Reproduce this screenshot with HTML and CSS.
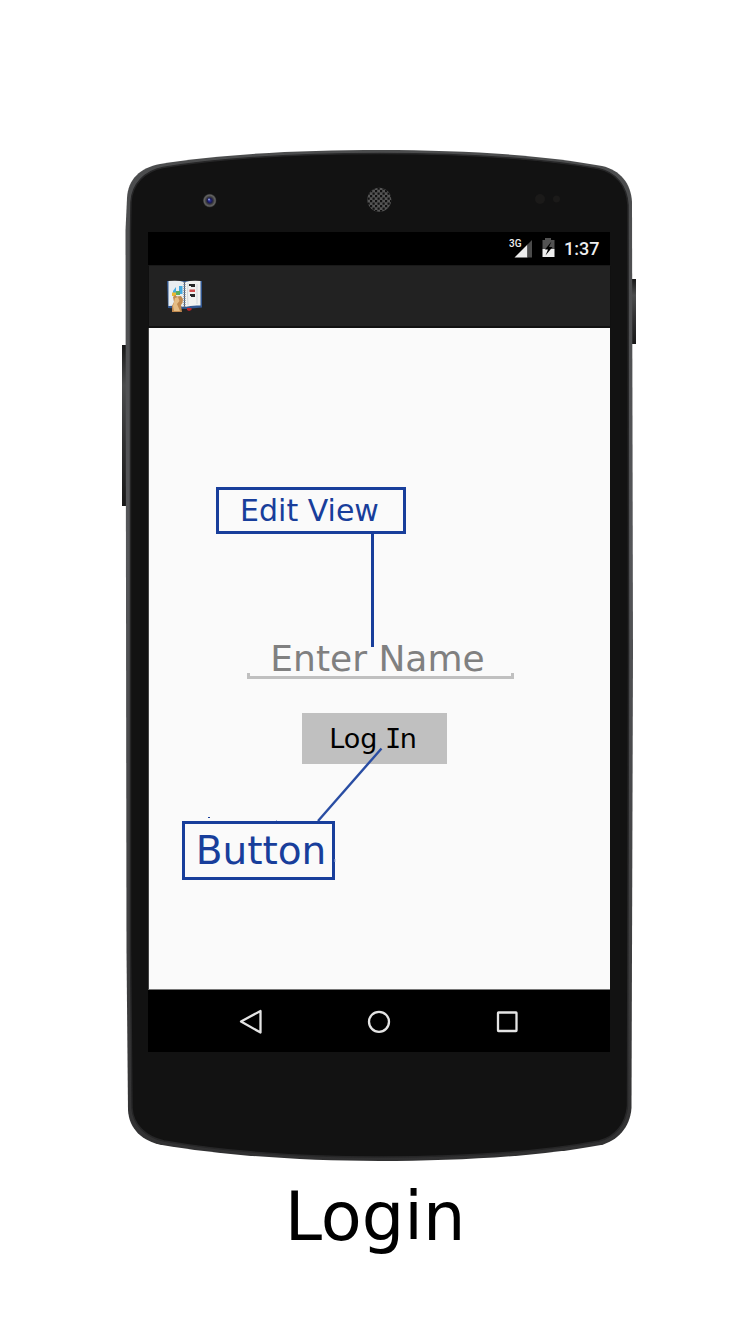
FILE: index.html
```
<!DOCTYPE html>
<html lang="en">
<head>
<meta charset="utf-8">
<title>Login</title>
<link rel="stylesheet" href="styles.css">
</head>
<body>
<figure class="mockup">
  <div class="phone">
    <svg class="shell" viewBox="115 150 530 1011" aria-hidden="true">
      <defs>
        <linearGradient id="rim" x1="0" y1="0" x2="0" y2="1">
          <stop offset="0" stop-color="#4b4c4d"/><stop offset=".4" stop-color="#555659"/><stop offset=".85" stop-color="#3b3b3c"/><stop offset="1" stop-color="#303031"/>
        </linearGradient>
        <linearGradient id="key" x1="0" y1="0" x2="0" y2="1">
          <stop offset="0" stop-color="#171717"/><stop offset=".25" stop-color="#4b4c4d"/><stop offset=".6" stop-color="#303031"/><stop offset="1" stop-color="#181818"/>
        </linearGradient>
        <radialGradient id="lens"><stop offset="0" stop-color="#3138ad"/><stop offset=".35" stop-color="#191950"/><stop offset=".55" stop-color="#3c3c3c"/><stop offset=".8" stop-color="#656565"/><stop offset="1" stop-color="#252525"/></radialGradient>
        <pattern id="mesh" width="5" height="5" patternUnits="userSpaceOnUse"><path d="M0 0h2.2v2.2H0zM2.500 2.500h2.200v2.200H2.500z" fill="#111"/></pattern>
      </defs>
      <path d="M122 345h6v161h-6z" fill="url(#key)"/>
      <path d="M630 279h6v65h-6z" fill="url(#key)"/>
      <path d="M125.500 230L127 198C128 179 140 168 160 164C222 154 300 150 380 150C465 150 542 155 602 166C620 170 631 183 632 202L633 650L631.500 1108C630 1128 617 1141 601 1145C542 1156 460 1161 379 1161C300 1161 220 1155 162 1145C142 1141 129 1129 128 1110L126.500 950L126 600Z" fill="url(#rim)"/>
      <path d="M130.500 230L131 202C132 184 145 171 163 167.500C225 157.500 302 153.500 380 153.500C463 153.500 540 158.500 598 168.500C616 172.500 627 186 628 205L628.500 650L627.500 1106C626 1124 615 1137 599 1141C540 1152 459 1157 379 1157C301 1157 222 1151 164 1141C146 1137 133 1125 132 1108L130.500 950Z" fill="#121212" stroke="#262627" stroke-width="1.5"/>
      <circle cx="209.700" cy="200.600" r="6.800" fill="url(#lens)"/><circle cx="209" cy="199.500" r="1" fill="#8b99e0"/>
      <circle cx="379.300" cy="199.700" r="12" fill="#555"/><circle cx="379.300" cy="199.700" r="12" fill="url(#mesh)"/>
      <circle cx="540" cy="199" r="5" fill="#1b1a19"/><circle cx="556.500" cy="199" r="3.500" fill="#1b1a19"/>
    </svg>

    <div class="screen">
      <header class="status">
        <svg class="signal" viewBox="0 0 24 20" aria-hidden="true"><path d="M5.500 18.500 18.500 5.500V18.500Z" fill="#eee"/><path d="M18.500 5.500 23 1V18.500H18.500Z" fill="#4b4b4b"/></svg>
        <span class="network">3G</span>
        <svg class="battery" viewBox="0 0 13 20" aria-hidden="true"><path d="M.5 2H3V0H9V2H12.500V11H.5Z" fill="#525252"/><path d="M.5 11H12.500V19H.5Z" fill="#eee"/><path d="M9.500 3.500 3 11.500H6L3.500 17.500 10.500 9H7Z" fill="#000"/></svg>
        <time class="clock">1:37</time>
      </header>

      <div class="appbar">
        <svg class="book" viewBox="0 0 36 34" aria-hidden="true">
          <path d="M0 1H35V27.500L19 29 1 28Z" fill="#31568f"/>
          <path d="M1.500 1Q12 0 17 2V27Q10 25 1.500 26Z" fill="#e8edf0"/>
          <path d="M18 2Q25 0 33.500 1V25.500Q24 25 18 27Z" fill="#f2f2f0"/>
          <path d="M17.500 2V27" stroke="#777" stroke-width="2" stroke-dasharray="1 1"/>
          <path d="M21 3Q20 14 21 25M30 4V24" stroke="#d2d7dc" stroke-width="1" fill="none"/>
          <path d="M6 11 9 7V14L6 15ZM12 6H15.500V14H12Z" fill="#43a9df"/>
          <path d="M5 12.500H9V16H5Z" fill="#e8b92f"/><path d="M9 11H13V15H9Z" fill="#56ac61"/>
          <path d="M22 4H28V7H24V6H22ZM23 14H28V17H24V16H23Z" fill="#272727"/><path d="M22.500 9.500H28V12H22.500Z" fill="#d04c4c"/>
          <path d="M6 17 8 15 10 16.500 14 16 16 19 15.500 23 14 25 15 32H5L5 26 7 22Z" fill="#c0894f"/>
          <path d="M8 18 11 17 12.500 21 10 24 13 31H7L6 26Z" fill="#e5bd85"/>
          <path d="M20 28H24.500V30L22 31 20 30Z" fill="#bc2429"/>
        </svg>
      </div>

      <main class="content">
        <div class="note note-edit"><span>Edit View</span></div>
        <div class="field"><span>Enter Name</span></div>
        <button class="login" type="button"><span>Log <span class="serif-i">I</span>n</span></button>
        <div class="note note-button"><span>Button</span></div>
        <svg class="connectors" viewBox="148 327 463 663" aria-hidden="true">
          <path d="M372.500 533V647" stroke="#183e9b" stroke-width="3"/>
          <path d="M318 821 381.500 748.500" stroke="#294da3" stroke-width="2.400"/>
          <path d="M208 817h2v1h-2z" fill="#183e9b"/><path d="M276 820.500h1M335 859v3" stroke="#a8b7dc"/>
        </svg>
      </main>

      <nav class="navbar">
        <svg viewBox="0 0 26 26" aria-hidden="true"><path d="M3 12.500 22.500 2V23.500Z" /></svg>
        <svg viewBox="0 0 26 26" aria-hidden="true"><circle cx="13" cy="12.800" r="10"/></svg>
        <svg viewBox="0 0 26 26" aria-hidden="true"><rect x="4" y="3.500" width="18.500" height="18.500" rx=".5"/></svg>
      </nav>
    </div>
  </div>
  <figcaption class="caption"><span>Login</span></figcaption>
</figure>
</body>
</html>
```

FILE: styles.css
```
* { box-sizing: border-box; }
body { margin: 0; background: #fff; font-family: "DejaVu Sans", Verdana, sans-serif; }
.mockup { margin: 0; width: 756px; height: 1323px; padding-top: 150px; overflow: hidden; }
.phone { position: relative; width: 530px; height: 1011px; margin-left: 115px; padding: 82px 0 0 33px; }
.shell { position: absolute; inset: 0; width: 530px; height: 1011px; }
.screen { position: relative; display: flex; flex-direction: column; width: 463px; height: 820px; }

.status { display: flex; align-items: flex-start; height: 33px; width: 462px; padding: 7px 10px 0 361px; background: #000; color: #eee; position: relative; }
.signal { width: 24px; height: 20px; flex: none; }
.network { position: absolute; left: 361px; top: 6px; font: 500 10px/12px Roboto, sans-serif; }
.battery { width: 13px; height: 20px; margin: -1px 0 0 9px; flex: none; }
.clock { margin: -1px 0 0 9px; font: 500 18px/21px Roboto, sans-serif; }

.appbar { height: 63px; padding: 14px 0 0 19px; background: #222; border: 1px solid #101010; border-top-color: #191919; border-bottom: 2px solid #111; }
.book { display: block; width: 36px; height: 34px; margin-left: -1px; }

.content { position: relative; width: 462px; height: 662px; padding-top: 159px; background: #fafafa; border-left: 1px solid #444; border-bottom: 1px solid #777; }
.note { display: flex; align-items: center; justify-content: center; border: 3px solid #183e9b; color: #183e9b; white-space: nowrap; }
.note-edit { width: 190px; height: 47px; margin-left: 67px; padding-right: 3px; font-size: 30px; }
.field { width: 267px; height: 37px; margin: 108px 0 0 98px; text-align: center; padding-right: 6px; font-size: 36px; line-height: 33px; color: #808080; white-space: nowrap;
  background: linear-gradient(#c0c0c0, #c0c0c0) bottom / 100% 3px no-repeat, linear-gradient(#c0c0c0, #c0c0c0) left bottom / 3px 6px no-repeat, linear-gradient(#c0c0c0, #c0c0c0) right bottom / 3px 6px no-repeat; }
.login { display: block; width: 145px; height: 51px; margin: 34px 0 0 153px; padding: 0 3px 0 0; border: 0; background: #c0c0c0; color: #000; font: 27px/51px "DejaVu Sans", Verdana, sans-serif; }
.serif-i { font-family: "DejaVu Sans Mono", monospace; margin: 0 -1.5px 0 -1px; }
.note-button { width: 153px; height: 59px; margin: 57px 0 0 33px; padding-left: 5px; font-size: 39px; }
.connectors { position: absolute; top: -1px; left: -1px; width: 463px; height: 663px; }

.navbar { display: flex; justify-content: space-between; align-items: center; width: 462px; height: 62px; padding: 1px 90px 0; background: #000; }
.navbar svg { width: 26px; height: 26px; fill: none; stroke: #e4e4e4; stroke-width: 2.3; stroke-linejoin: round; }

.caption { height: 80px; margin-top: 16px; padding-right: 6px; text-align: center; font-size: 67px; line-height: 80px; color: #000; }
```
